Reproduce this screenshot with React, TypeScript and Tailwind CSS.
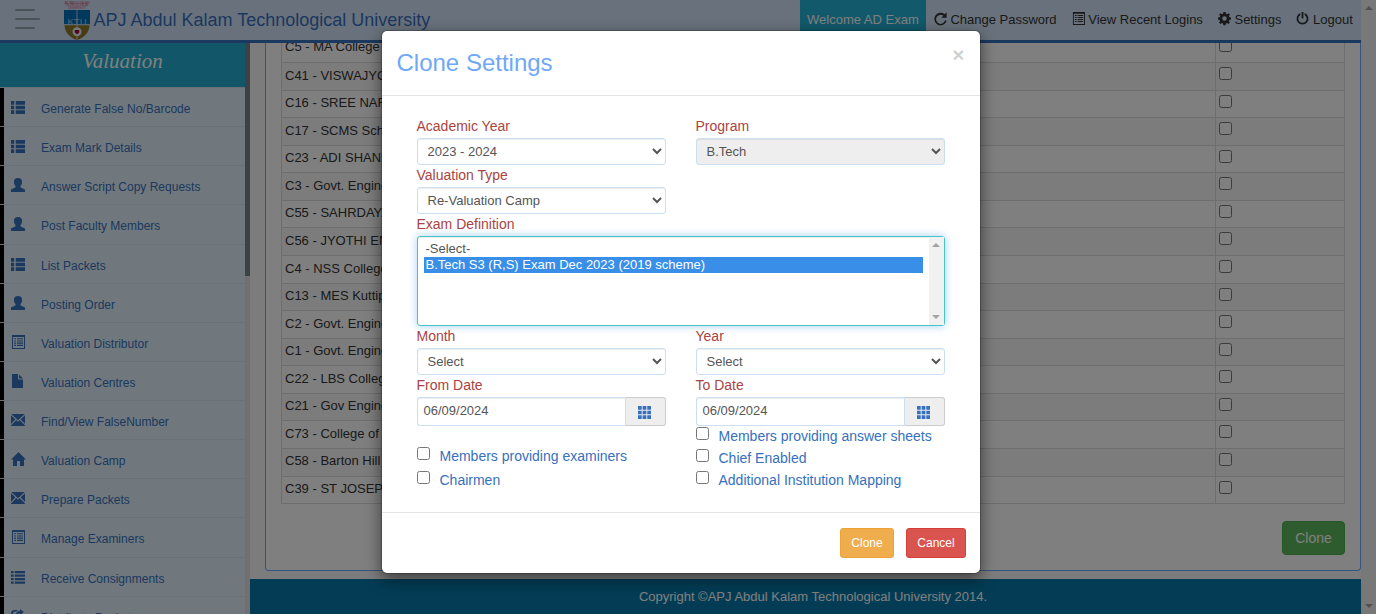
import React from "react";

type IconName = "thlist" | "user" | "listalt" | "file" | "envelope" | "home" | "list" | "share" | "refresh" | "cog" | "power" | "grid";

function Icon({ name, className = "" }: { name: IconName; className?: string }) {
  const shapes: Record<IconName, React.ReactNode> = {
    thlist: (
      <path d="M0 1h3.200v3.700H0zM4.700 1H14v3.700H4.700zM0 5.700h3.200v3.600H0zM4.700 5.700H14v3.600H4.700zM0 10.300h3.200V14H0zM4.700 10.300H14V14H4.700z" />
    ),
    user: (
      <path d="M7 0c2.600 0 4.100 1.400 4.100 3.800 0 1.900-.6 3.300-1.600 4.300v1.100c.5.800 2.900 1.200 3.900 1.900.5.400.6 1 .6 2.900H0c0-1.900.1-2.500.6-2.900 1-.7 3.400-1.100 3.900-1.900V8.100C3.500 7.100 2.900 5.700 2.900 3.800 2.900 1.400 4.400 0 7 0z" />
    ),
    listalt: (
      <path fillRule="evenodd" d="M1 0h13v14H1zM2 2v11h11V2zM3.200 3.200H5v1.100H3.200zM6 3.200h6v1.100H6zM3.200 5.400H5v1.100H3.200zM6 5.400h6v1.100H6zM3.200 7.600H5v1.100H3.200zM6 7.600h6v1.100H6zM3.200 9.800H5v1.100H3.200zM6 9.800h6v1.100H6z" />
    ),
    file: <path d="M1 0h6v5.500h5V14H1zM8 .5l4 4H8z" />,
    envelope: (
      <path d="M.3 1h13.400L7 7.200zM0 2.200l4.400 4.100L0 11zM14 2.200L9.600 6.300 14 11zM5.300 7.100L7 8.700l1.700-1.600L14 12.500v.5H0v-.5z" />
    ),
    home: <path d="M7.500 0L15 7.500h-2V14H9V9H6v5H2V7.500H0z" />,
    list: (
      <path d="M0 1h2.600v2.300H0zM3.700 1H14v2.300H3.700zM0 4.500h2.600v2.300H0zM3.700 4.500H14v2.300H3.700zM0 8h2.600v2.300H0zM3.700 8H14v2.300H3.700zM0 11.500h2.600v2.300H0zM3.700 11.500H14v2.300H3.700z" />
    ),
    share: (
      <path d="M9 0l3.800 3L9 6.500V4.600C7 4.500 5.500 5.500 4.500 7c.2-3 2-5 4.500-5.300zM3.500 1H7L5.500 2.500H4A2 2 0 0 0 2 4.500v5a2 2 0 0 0 2 2h6a2 2 0 0 0 2-2V8l2-1.500V10a3.500 3.500 0 0 1-3.500 3.500h-7A3.500 3.500 0 0 1 0 10V4.500A3.500 3.500 0 0 1 3.500 1z" />
    ),
    refresh: (
      <path d="M11.500 2.300L13.600.4v5.800H7.900l2.200-2.200A4.900 4.900 0 1 0 11.900 9l1.700.7A6.800 6.800 0 1 1 11.500 2.300z" />
    ),
    cog: (
      <path fillRule="evenodd" d="M5.800 0h2.400l.4 1.900 1.200.5L11.400 1.300l1.500 1.500-1.100 1.600.5 1.200 1.700.3v2.300l-1.800.4-.5 1.200 1.100 1.600-1.500 1.500-1.600-1.100-1.200.5-.3 1.900H5.800l-.4-1.900-1.200-.5-1.600 1.100-1.500-1.500 1.100-1.600-.5-1.200L0 8.200V5.900l1.800-.3.500-1.200L1.200 2.800l1.500-1.500 1.600 1.100 1.100-.5zM7 4.700a2.400 2.400 0 1 0 0 4.800 2.400 2.400 0 0 0 0-4.800z" />
    ),
    power: (
      <path d="M6 0h2v7H6zM4.600 1.200v2.200a4.500 4.500 0 1 0 4.800 0V1.200a6.400 6.400 0 1 1-4.800 0z" />
    ),
    grid: (
      <path d="M0 0h4v4H0zM5 0h4v4H5zM10 0h4v4h-4zM0 5h4v4H0zM5 5h4v4H5zM10 5h4v4h-4zM0 10h4v4H0zM5 10h4v4H5zM10 10h4v4h-4z" />
    ),
  };
  return (
    <svg viewBox="0 0 14 14" fill="currentColor" className={`shrink-0 overflow-visible ${className}`}>
      {shapes[name]}
    </svg>
  );
}

const menu: [IconName, string][] = [
  ["thlist", "Generate False No/Barcode"],
  ["thlist", "Exam Mark Details"],
  ["user", "Answer Script Copy Requests"],
  ["user", "Post Faculty Members"],
  ["thlist", "List Packets"],
  ["user", "Posting Order"],
  ["listalt", "Valuation Distributor"],
  ["file", "Valuation Centres"],
  ["envelope", "Find/View FalseNumber"],
  ["home", "Valuation Camp"],
  ["envelope", "Prepare Packets"],
  ["listalt", "Manage Examiners"],
  ["list", "Receive Consignments"],
  ["share", "Distribute Packets"],
];

const colleges = [
  "C5 - MA College of Engineering",
  "C41 - VISWAJYOTHI College",
  "C16 - SREE NARAYANA",
  "C17 - SCMS School",
  "C23 - ADI SHANKARA",
  "C3 - Govt. Engineering",
  "C55 - SAHRDAYA",
  "C56 - JYOTHI ENGG",
  "C4 - NSS College",
  "C13 - MES Kuttippuram",
  "C2 - Govt. Engineering",
  "C1 - Govt. Engineering",
  "C22 - LBS College",
  "C21 - Gov Engineering",
  "C73 - College of Engg",
  "C58 - Barton Hill",
  "C39 - ST JOSEPH'S",
];

function Logo() {
  return (
    <svg viewBox="0 0 26 40" className="ml-6 h-10 w-[26px] shrink-0">
      <g fontFamily="Liberation Sans" fontSize="3.400" fill="#d4688e" textAnchor="middle">
        <text x="13" y="3.500" textLength="25">APJ ABDUL KALAM</text>
        <text x="13" y="6" textLength="24">TECHNOLOGICAL</text>
        <text x="13" y="8.500" textLength="18">UNIVERSITY</text>
      </g>
      <path d="M0 10h26v15H0z" fill="#0070bd" />
      <path d="M.5 25h25c0 6.500-4.500 12.500-12.500 15C5 37.500.5 31.500.5 25z" fill="#8c7a2b" />
      <path d="M0 24h26v1.300H0z" fill="#b9d0dc" />
      <text x="13" y="24.500" fontFamily="Liberation Sans" fontSize="9.500" fill="#a8cce8" textAnchor="middle" textLength="19">KTU</text>
      <path d="M13 9v31" stroke="#f2c7d6" strokeWidth=".9" />
      <circle cx="13" cy="31.700" r="4.500" fill="#eee" />
      <path d="M10.800 29.900h4.400v2.500L13 34.200l-2.200-1.800z" fill="#a80045" />
    </svg>
  );
}

function Header() {
  return (
    <header className="flex h-[43px] shrink-0 items-start border-b-[3px] border-[#3670be] bg-[#d3e5f8]">
      <div className="ml-[15px] mt-[9px] flex w-[25px] flex-col gap-[7px]">
        <span className="h-0.5 w-5 rounded bg-[#93a4ad]" />
        <span className="h-0.5 w-[25px] rounded bg-[#93a4ad]" />
        <span className="h-0.5 w-5 rounded bg-[#93a4ad]" />
      </div>
      <Logo />
      <div className="ml-[3.500px] text-[18px] leading-[40px] text-[#3670be]">APJ Abdul Kalam Technological University</div>
      <nav className="ml-auto mr-[0.700px] flex h-10 text-[13px] leading-[39px] text-[#333]">
        <span className="bg-[#22b2d6] px-[7.500px] text-white">Welcome AD Exam</span>
        <NavItem icon="refresh" text="Change Password" />
        <NavItem icon="listalt" text="View Recent Logins" />
        <NavItem icon="cog" text="Settings" />
        <NavItem icon="power" text="Logout" />
      </nav>
    </header>
  );
}

function NavItem({ icon, text }: { icon: IconName; text: string }) {
  return (
    <a className="flex px-[7.500px]">
      <Icon name={icon} className="mr-[3.600px] mt-3 size-[13px]" />
      {text}
    </a>
  );
}

function Sidebar() {
  return (
    <aside className="flex w-[250px] shrink-0 overflow-hidden">
      <div className="w-[245px]">
        <div className="h-11 bg-[#22aed2] text-center font-['Liberation_Serif',serif] text-[21px] italic leading-[37px] text-white">
          Valuation
        </div>
        <ul className="text-[12px] leading-[17.140px] text-[#3670be]">
          {menu.map(([icon, text], i) => (
            <li key={i} className="h-[39.140px] border-t border-[#d3e1ec] bg-[#e1f0fb]">
              <a className="flex h-full border-l-4 border-black pl-[7px]">
                <Icon name={icon} className="mt-3 size-3.5" />
                <span className="ml-4 mt-[13px] whitespace-nowrap">{text}</span>
              </a>
            </li>
          ))}
        </ul>
      </div>
      <div className="w-[5px] bg-[#e3dfdf]">
        <div className="h-[233px] bg-[#76838a]" />
      </div>
    </aside>
  );
}

function Content() {
  return (
    <div className="flex min-w-0 flex-1 flex-col bg-[#f8f8f8]">
      <section className="ml-[15px] flex h-[528px] shrink-0 flex-col overflow-hidden rounded-b border border-t-0 border-[#6ea8f7] bg-white px-[15px]">
        <div className="-mt-[8.500px] shrink-0 border-x border-b border-[#ddd] text-[13px] leading-[18.570px] text-[#333]">
          {colleges.map((c, i) => (
            <div key={c} className={`flex h-[27.570px] ${i ? "border-t border-[#ddd]" : ""} ${i % 2 ? "bg-[#f9f9f9]" : "bg-white"}`}>
              <div className="flex-1 px-[3px] pt-[3.500px]">{c}</div>
              <div className="w-[129px] border-l border-[#ddd] px-[3px] pt-1">
                <input type="checkbox" className="block size-[13px]" />
              </div>
            </div>
          ))}
        </div>
        <button className="ml-auto mt-[17px] h-[34px] w-[63px] shrink-0 rounded border border-[#4cae4c] bg-[#5cb85c] text-[14px] text-white">Clone</button>
      </section>
      <footer className="mt-2 flex-1 bg-[#0779a9] text-center text-[13px] leading-[36px] text-white">
        <span className="ml-[15px]">Copyright ©APJ Abdul Kalam Technological University 2014.</span>
      </footer>
    </div>
  );
}

function Field({ label, children }: { label: string; children: React.ReactNode }) {
  return (
    <div>
      <div className="h-[22px] text-[14px] leading-5 text-[#a94442]">{label}</div>
      {children}
    </div>
  );
}

function Select({ value, disabled = false }: { value: string; disabled?: boolean }) {
  return (
    <select
      defaultValue={value}
      disabled={disabled}
      className={`block h-[27px] w-full rounded-[3px] border border-[#cbdff2] px-1.5 text-[13px] text-[#555] opacity-100 shadow-[inset_0_1px_1px_rgba(0,0,0,0.075)] ${disabled ? "bg-[#eee]" : "bg-white"}`}
    >
      <option>{value}</option>
    </select>
  );
}

function DateInput() {
  return (
    <div className="flex h-[29px]">
      <div className="flex-1 rounded-l-[3px] border border-r-0 border-[#cbdff2] pl-1.5 text-[13px] leading-[26px] text-[#555] shadow-[inset_0_1px_1px_rgba(0,0,0,0.075)]">06/09/2024</div>
      <div className="flex w-[41px] justify-center rounded-r-[3px] border border-[#ccc] border-l-[#cbdff2] bg-[#eee] pt-2 text-[#3670be]">
        <Icon name="grid" className="ml-[-1px] size-[13px]" />
      </div>
    </div>
  );
}

function Check({ label, className }: { label: string; className: string }) {
  return (
    <label className={`flex text-[14px] leading-5 text-[#3670be] ${className}`}>
      <input type="checkbox" className="mr-[10px] mt-px size-[13px]" />
      {label}
    </label>
  );
}

function Modal() {
  return (
    <div className="mx-auto mt-[30px] h-[544px] w-[600px] rounded-[6px] border border-black/20 bg-white bg-clip-padding shadow-[0_5px_15px_rgba(0,0,0,0.5)]">
      <div className="flex h-[65px] justify-between border-b border-[#e5e5e5] px-[15px]">
        <h4 className="text-[24px] leading-[63px] text-[#6ea8f7]">Clone Settings</h4>
        <span className="mt-[14px] text-[21px] font-bold leading-5 text-black/20">×</span>
      </div>
      <div className="h-[417px] border-b border-[#e5e5e5] px-[35px] pt-5">
        <div className="grid grid-cols-[249px_249px] gap-x-[30px]">
          <Field label="Academic Year"><Select value="2023 - 2024" /></Field>
          <Field label="Program"><Select value="B.Tech" disabled /></Field>
          <Field label="Valuation Type"><Select value="Re-Valuation Camp" /></Field>
          <div />
          <div className="col-span-2">
            <Field label="Exam Definition">
              <div className="flex h-[90px] rounded-[3px] border border-[#48c4c9] bg-white text-[13px] leading-4 text-[#555] shadow-[inset_0_1px_1px_rgba(0,0,0,0.075),0_0_8px_rgba(102,175,233,0.6)]">
                <div className="flex-1 px-1.5 pt-1">
                  <div className="pl-0.5">-Select-</div>
                  <div className="bg-[#398ee7] pl-0.5 text-white">B.Tech S3 (R,S) Exam Dec 2023 (2019 scheme)</div>
                </div>
                <div className="flex w-[15px] flex-col items-center justify-between bg-[#f1f1f1] py-1.5">
                  <span className="border-x-4 border-b-4 border-x-transparent border-b-[#a3a3a3]" />
                  <span className="border-x-4 border-t-4 border-x-transparent border-t-[#a3a3a3]" />
                </div>
              </div>
            </Field>
          </div>
          <Field label="Month"><Select value="Select" /></Field>
          <Field label="Year"><Select value="Select" /></Field>
          <Field label="From Date"><DateInput /></Field>
          <Field label="To Date"><DateInput /></Field>
          <div className="pt-5">
            <Check className="h-6" label="Members providing examiners" />
            <Check className="h-6" label="Chairmen" />
          </div>
          <div>
            <Check className="h-[22px]" label="Members providing answer sheets" />
            <Check className="h-[22px]" label="Chief Enabled" />
            <Check className="h-[22px]" label="Additional Institution Mapping" />
          </div>
        </div>
      </div>
      <div className="flex justify-end gap-3 pr-[14px] pt-[15px] text-[12px] text-white">
        <button className="h-[30px] w-[54px] rounded-[3px] border border-[#eea236] bg-[#f0ad4e] pl-px">Clone</button>
        <button className="h-[30px] w-[60px] rounded-[3px] border border-[#d43f3a] bg-[#d9534f] pl-px">Cancel</button>
      </div>
    </div>
  );
}

export default function App() {
  return (
    <div className="relative flex h-[614px] w-[1376px] overflow-hidden font-['Liberation_Sans',Arial,sans-serif]">
      <div className="flex w-[1361px] flex-col">
        <Header />
        <div className="flex min-h-0 flex-1">
          <Sidebar />
          <Content />
        </div>
      </div>
      <div className="flex w-[15px] flex-col items-center justify-between bg-[#f1f1f1] py-[6px]">
        <span className="border-x-4 border-b-4 border-x-transparent border-b-[#a3a3a3]" />
        <span className="border-x-4 border-t-4 border-x-transparent border-t-[#a3a3a3]" />
      </div>
      <div className="absolute inset-0 bg-black/50 pr-[15px]">
        <Modal />
      </div>
    </div>
  );
}
